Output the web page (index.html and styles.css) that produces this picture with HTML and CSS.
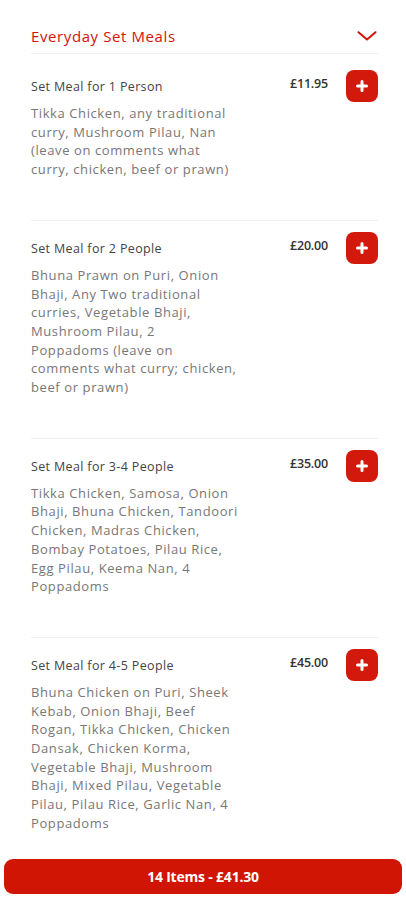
FILE: index.html
```html
<!DOCTYPE html>
<html lang="en">
<head>
<meta charset="utf-8">
<title>Everyday Set Meals</title>
<link rel="stylesheet" href="styles.css">
</head>
<body>
<main class="menu">
  <section class="category">
    <header class="category-head">
      <h2 class="category-title">Everyday Set Meals</h2>
      <svg class="chevron" width="20" height="10" viewBox="0 0 20 10" aria-hidden="true"><path d="M1.5 1.2 L10 8.6 L18.5 1.2" fill="none" stroke="#d0140a" stroke-width="2" stroke-linecap="round" stroke-linejoin="round"/></svg>
    </header>

    <article class="item">
      <div class="item-info">
        <h3 class="item-name">Set Meal for 1 Person</h3>
        <p class="item-desc">Tikka Chicken, any traditional curry, Mushroom Pilau, Nan (leave on comments what curry, chicken, beef or prawn)</p>
      </div>
      <span class="item-price">£11.95</span>
      <button class="add-btn" aria-label="Add"><svg width="12" height="12" viewBox="0 0 12 12"><path d="M6 1.5v9M1.5 6h9" stroke="#fff" stroke-width="3" stroke-linecap="round"/></svg></button>
    </article>

    <article class="item">
      <div class="item-info">
        <h3 class="item-name">Set Meal for 2 People</h3>
        <p class="item-desc">Bhuna Prawn on Puri, Onion Bhaji, Any Two traditional curries, Vegetable Bhaji, Mushroom Pilau, 2 Poppadoms&nbsp;(leave on comments what curry; chicken, beef or prawn)</p>
      </div>
      <span class="item-price">£20.00</span>
      <button class="add-btn" aria-label="Add"><svg width="12" height="12" viewBox="0 0 12 12"><path d="M6 1.5v9M1.5 6h9" stroke="#fff" stroke-width="3" stroke-linecap="round"/></svg></button>
    </article>

    <article class="item">
      <div class="item-info">
        <h3 class="item-name">Set Meal for 3-4 People</h3>
        <p class="item-desc">Tikka Chicken, Samosa, Onion Bhaji, Bhuna Chicken, Tandoori Chicken, Madras Chicken, Bombay Potatoes, Pilau Rice, Egg Pilau, Keema Nan, 4 Poppadoms</p>
      </div>
      <span class="item-price">£35.00</span>
      <button class="add-btn" aria-label="Add"><svg width="12" height="12" viewBox="0 0 12 12"><path d="M6 1.5v9M1.5 6h9" stroke="#fff" stroke-width="3" stroke-linecap="round"/></svg></button>
    </article>

    <article class="item">
      <div class="item-info">
        <h3 class="item-name">Set Meal for 4-5 People</h3>
        <p class="item-desc">Bhuna Chicken on Puri, Sheek Kebab, Onion Bhaji, Beef Rogan, Tikka Chicken, Chicken Dansak, Chicken Korma, Vegetable Bhaji, Mushroom Bhaji, Mixed Pilau, Vegetable Pilau, Pilau Rice, Garlic Nan, 4 Poppadoms</p>
      </div>
      <span class="item-price">£45.00</span>
      <button class="add-btn" aria-label="Add"><svg width="12" height="12" viewBox="0 0 12 12"><path d="M6 1.5v9M1.5 6h9" stroke="#fff" stroke-width="3" stroke-linecap="round"/></svg></button>
    </article>
  </section>
</main>

<footer class="basket-bar">
  <button class="basket-btn">14 Items - £41.30</button>
</footer>
</body>
</html>
```

FILE: styles.css
```css
* { box-sizing: border-box; }

html, body {
  margin: 0;
  padding: 0;
  background: #fff;
}

body {
  font-family: "Open Sans", "Liberation Sans", sans-serif;
  color: #444;
}

.menu {
  padding: 0 28px 0 31px;
}

.category-head {
  display: flex;
  align-items: center;
  justify-content: space-between;
  height: 54px;
  padding-top: 19px;
  border-bottom: 1px solid #f0f0f0;
  margin-bottom: 5px;
}

.category-title {
  margin: 0;
  font-size: 15px;
  font-weight: 500;
  color: #d0140a;
  letter-spacing: 0.6px;
}

.chevron {
  display: block;
  margin-right: 1px;
}

.item {
  display: flex;
  align-items: flex-start;
  padding: 11px 0 41px;
  border-bottom: 1px solid #f0f0f0;
}

.item:last-child {
  border-bottom: none;
  padding-bottom: 16px;
}

.item-info {
  width: 209px;
  flex: none;
}

.item-name {
  margin: 8px 0 0;
  font-size: 12.5px;
  line-height: 18px;
  font-weight: 400;
  color: #444;
  letter-spacing: 0.35px;
}

.item-desc {
  margin: 8px 0 0;
  font-size: 13px;
  line-height: 18.7px;
  color: #777;
  letter-spacing: 0.6px;
}

.item-price {
  margin-left: auto;
  margin-top: 5px;
  font-size: 12.5px;
  line-height: 18px;
  font-weight: 600;
  color: #333;
  letter-spacing: -0.2px;
}

.add-btn {
  flex: none;
  width: 32px;
  height: 32px;
  margin-left: 18px;
  border: none;
  border-radius: 8px;
  background: #d3190b;
  display: flex;
  align-items: center;
  justify-content: center;
  padding: 0;
}

.add-btn svg { display: block; }

.basket-bar {
  position: fixed;
  left: 0;
  right: 0;
  bottom: 0;
  padding: 0 4px 6px;
  background: transparent;
}

.basket-btn {
  display: block;
  width: 100%;
  height: 35px;
  border: none;
  border-radius: 9px;
  background: #d01505;
  color: #fff;
  font-family: "Open Sans", "Liberation Sans", sans-serif;
  font-size: 14px;
  font-weight: 700;
  letter-spacing: -0.2px;
}
```
